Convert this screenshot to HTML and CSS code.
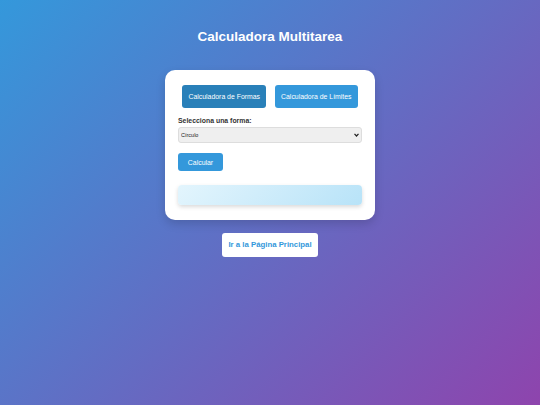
FILE: index.html
```html
<!DOCTYPE html>
<html lang="es">
<head>
<meta charset="utf-8">
<title>Calculadora Multitarea</title>
<link rel="stylesheet" href="styles.css">
</head>
<body>
<main class="page">
  <h1 class="title">Calculadora Multitarea</h1>
  <section class="card">
    <div class="tabs">
      <button class="btn tab active">Calculadora de Formas</button>
      <button class="btn tab">Calculadora de Límites</button>
    </div>
    <label class="label" for="forma">Selecciona una forma:</label>
    <div class="select-wrap">
      <select id="forma" class="select">
        <option>Círculo</option>
      </select>
      <svg class="chev" width="5" height="4" viewBox="0 0 5 4"><path d="M0.5 0.8 L2.5 3 L4.5 0.8" fill="none" stroke="#222" stroke-width="1.2"/></svg>
    </div>
    <button class="btn calc">Calcular</button>
    <div class="result"></div>
  </section>
  <a class="home" href="#">Ir a la Página Principal</a>
</main>
</body>
</html>
```
FILE: styles.css
```css
html, body {
  margin: 0;
  padding: 0;
}
body {
  min-height: 405px;
  background: linear-gradient(135deg, #3498db, #8e44ad);
  font-family: "Liberation Sans", Arial, sans-serif;
}
.page {
  display: flex;
  flex-direction: column;
  align-items: center;
  padding-top: 29px;
}
.title {
  margin: 0;
  color: #fff;
  font-size: 13.5px;
  font-weight: bold;
  line-height: 16px;
}
.card {
  margin-top: 25px;
  width: 210px;
  box-sizing: border-box;
  background: #fff;
  border-radius: 10px;
  padding: 15px 13px 15px;
  box-shadow: 0 4px 10px rgba(0,0,0,0.15);
  display: flex;
  flex-direction: column;
}
.tabs {
  display: flex;
  justify-content: center;
  gap: 9px;
}
.btn {
  font-family: "Liberation Sans", Arial, sans-serif;
  border: none;
  color: #fff;
  background: #3498db;
  border-radius: 3px;
  font-size: 6.9px;
  cursor: pointer;
  white-space: nowrap;
}
.tab {
  height: 23px;
  padding: 0 6px;
}
.tab.active {
  background: #2980b9;
}
.label {
  margin-top: 9px;
  font-size: 6.9px;
  font-weight: bold;
  color: #333;
}
.select-wrap {
  position: relative;
  margin-top: 3px;
}
.select {
  display: block;
  width: 100%;
  height: 16px;
  font-size: 5.5px;
  font-family: "Liberation Sans", Arial, sans-serif;
  background: #efefef;
  border: 1px solid #ddd;
  border-radius: 3px;
  padding: 0 2px;
  color: #222;
  appearance: none;
  -webkit-appearance: none;
}
.chev {
  position: absolute;
  right: 3px;
  top: 6px;
  pointer-events: none;
}
.calc {
  align-self: flex-start;
  margin-top: 10px;
  height: 18px;
  width: 45px;
}
.result {
  margin-top: 14px;
  height: 20px;
  border-radius: 4px;
  background: linear-gradient(135deg, #e3f5fd, #b8e3f8);
  box-shadow: 0 2px 4px rgba(0,0,0,0.15);
}
.home {
  margin-top: 13px;
  background: #fff;
  color: #3498db;
  font-weight: bold;
  font-size: 7.8px;
  text-decoration: none;
  padding: 0 6px;
  height: 24px;
  line-height: 24px;
  border-radius: 3px;
}
```
